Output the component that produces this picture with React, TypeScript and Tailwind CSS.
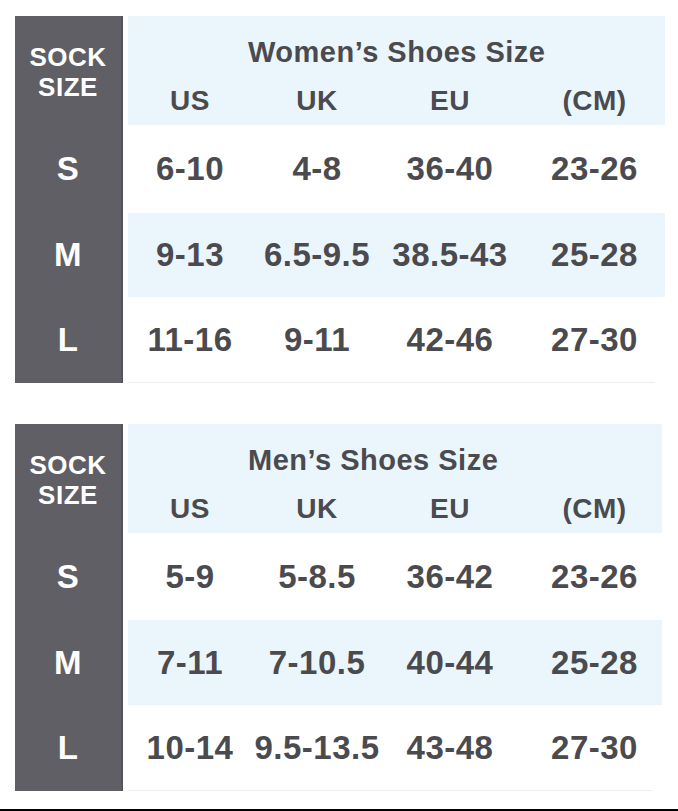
const women = [
  { size: "S", cells: ["6-10", "4-8", "36-40", "23-26"], h: "h-[88px]", bg: "bg-white" },
  { size: "M", cells: ["9-13", "6.5-9.5", "38.5-43", "25-28"], h: "h-[84px]", bg: "bg-[#eaf6fc]" },
  { size: "L", cells: ["11-16", "9-11", "42-46", "27-30"], h: "h-[86px]", bg: "bg-white" },
]

const men = [
  { size: "S", cells: ["5-9", "5-8.5", "36-42", "23-26"], h: "h-[87px]", bg: "bg-white" },
  { size: "M", cells: ["7-11", "7-10.5", "40-44", "25-28"], h: "h-[85px]", bg: "bg-[#eaf6fc]" },
  { size: "L", cells: ["10-14", "9.5-13.5", "43-48", "27-30"], h: "h-[86px]", bg: "bg-white" },
]

const cols = ["US", "UK", "EU", "(CM)"]
const gridCols = "grid grid-cols-[124px_130px_136px_147px]"

function SizeTable({ title, rows, width }: { title: string; rows: typeof women; width: string }) {
  return (
    <div className="flex ml-[15px]">
      {/* dark sock size column */}
      <div className="w-[108px] bg-[#605f66] border-r-2 border-[#55545a] flex flex-col text-white font-bold tracking-[0.5px]">
        <div className="h-[109px] flex flex-col items-center justify-center text-[26px] leading-[30px] pt-[2px]">
          <span>SOCK</span>
          <span>SIZE</span>
        </div>
        {rows.map(r => (
          <div key={r.size} className={`${r.h} flex items-center justify-center text-[33px]`}>
            {r.size}
          </div>
        ))}
      </div>

      <div className={`${width} ml-[5px] flex flex-col text-[#4a4a4f] font-bold tracking-[0.5px]`}>
        <div className="h-[109px] bg-[#eaf6fc] pt-[20px]">
          <div className="pl-[120px] text-[29px] leading-[32px]">{title}</div>
          <div className={`${gridCols} mt-[17px] text-[28px] leading-[32px] text-center`}>
            {cols.map((c, i) => (
              <div key={c} className={i === 3 ? "pl-[6px]" : ""}>{c}</div>
            ))}
          </div>
        </div>
        {rows.map((r, ri) => (
          <div
            key={r.size}
            className={`${r.h} ${r.bg} ${gridCols} items-center text-center text-[33px] ${ri === rows.length - 1 ? "border-b border-[#eeeeee] mr-[10px]" : ""}`}
          >
            {r.cells.map((c, i) => (
              <div key={i} className={i === 3 ? "pl-[6px]" : ""}>{c}</div>
            ))}
          </div>
        ))}
      </div>
    </div>
  )
}

export default function App() {
  return (
    <div
      className="w-[678px] h-[811px] bg-white flex flex-col pt-[16px] overflow-hidden"
      style={{ fontFamily: '"Liberation Sans", Arial, sans-serif' }}
    >
      <SizeTable title="Women’s Shoes Size" rows={women} width="w-[537px]" />
      <div className="h-[41px]" />
      <SizeTable title="Men’s Shoes Size" rows={men} width="w-[534px]" />
      <div className="flex-1" />
      <div className="h-[2px] bg-black" />
    </div>
  )
}
